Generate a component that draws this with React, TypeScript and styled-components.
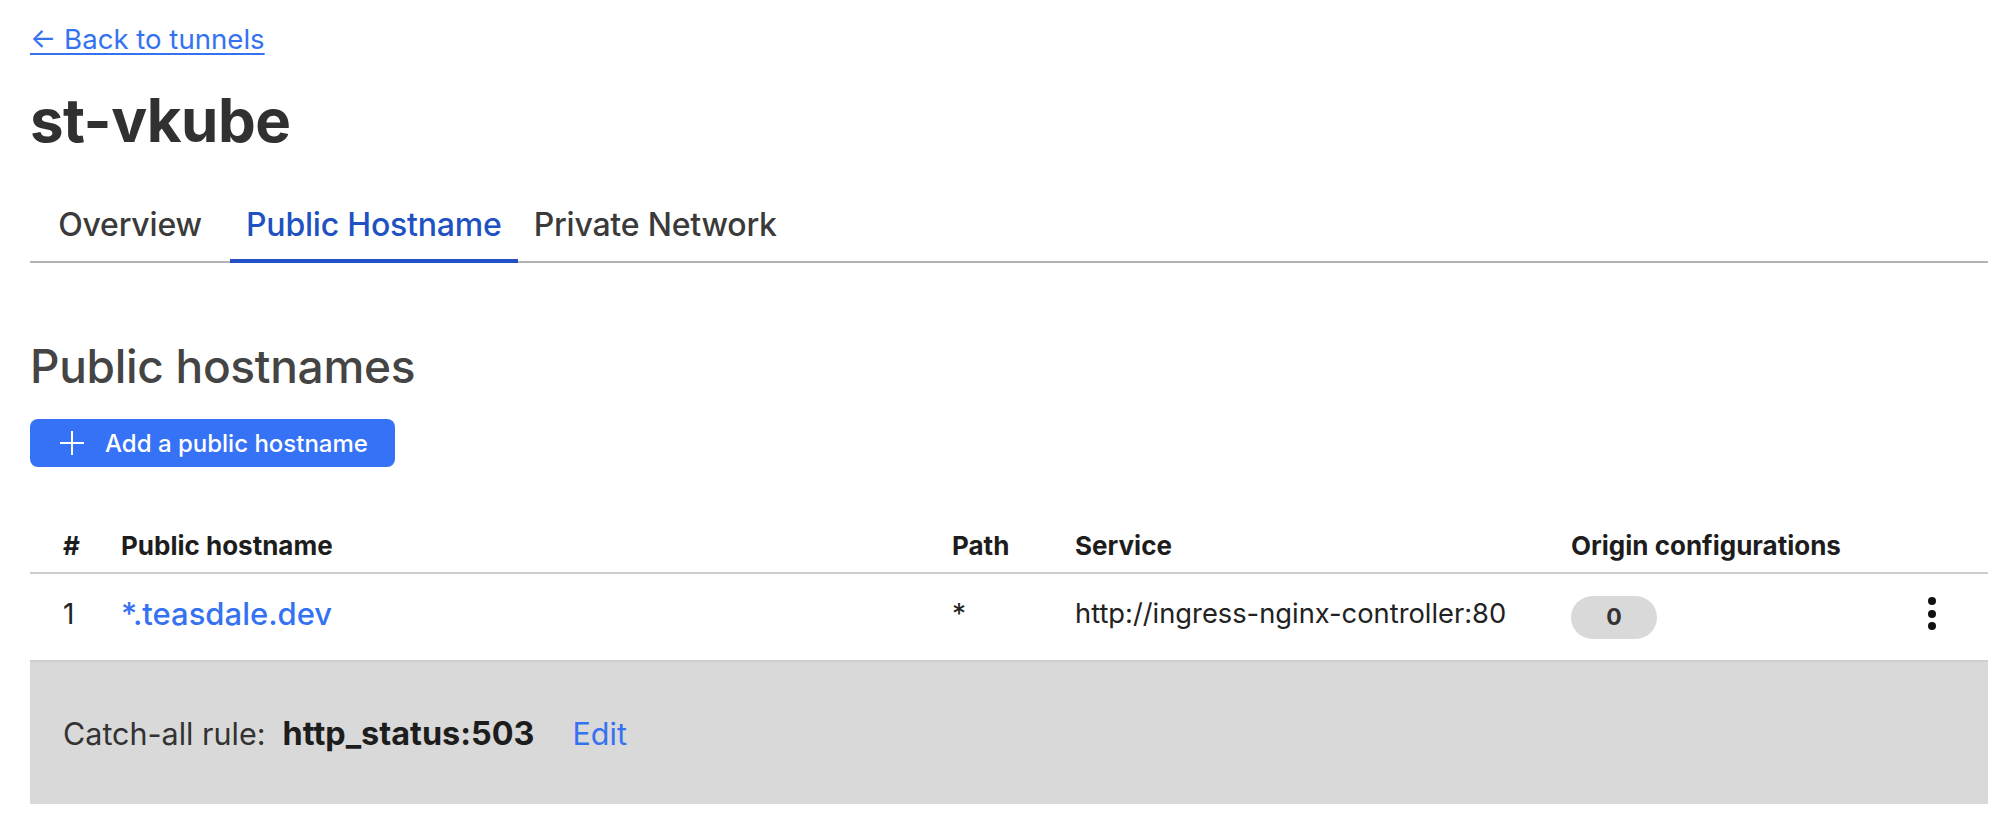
import React from "react";
import styled, { createGlobalStyle } from "styled-components";

const Global = createGlobalStyle`
  html, body { margin: 0; padding: 0; background: #ffffff; }
  body { font-family: Inter, "Noto Sans", "Liberation Sans", sans-serif; color: #313131; }
  * { box-sizing: border-box; }
`;

const Page = styled.div`
  display: flex;
  flex-direction: column;
  padding: 21px 28px 0 30px;
`;

const BackLink = styled.a`
  align-self: flex-start;
  font-size: 27.6px;
  line-height: 36px;
  color: #3572f2;
  text-decoration: underline;
  text-decoration-thickness: 2px;
  text-underline-offset: 4px;
  cursor: pointer;
`;

const Title = styled.h1`
  margin: 27px 0 0 0;
  font-size: 60px;
  line-height: 72px;
  font-weight: 700;
  color: #313131;
  letter-spacing: -0.5px;
`;

const TabList = styled.nav`
  display: flex;
  margin-top: 37px;
  box-shadow: inset 0 -2px 0 #b3b3b3;
`;

const Tab = styled.div<{ $active?: boolean; $wide?: boolean }>`
  min-width: ${(p) => (p.$wide ? "200px" : "0")};
  padding: 12px 16px 14px;
  text-align: center;
  font-size: 32px;
  line-height: 40px;
  font-weight: 500;
  color: ${(p) => (p.$active ? "#2051c2" : "#3a3a3a")};
  border-bottom: 4px solid ${(p) => (p.$active ? "#2350c4" : "transparent")};
  letter-spacing: -0.2px;
`;

const SectionTitle = styled.h2`
  margin: 75px 0 0 0;
  font-size: 46px;
  line-height: 56px;
  font-weight: 500;
  color: #444444;
  letter-spacing: -0.3px;
`;

const PrimaryButton = styled.button`
  align-self: flex-start;
  display: flex;
  align-items: center;
  gap: 21px;
  height: 48px;
  margin-top: 25px;
  padding: 0 27px 0 30px;
  border: none;
  border-radius: 8px;
  background: #3672f6;
  color: #ffffff;
  font-family: inherit;
  font-size: 24px;
  font-weight: 500;
  cursor: pointer;
`;

const Table = styled.div`
  margin-top: 51px;
  display: grid;
  grid-template-columns: 58px 831px 123px 496px 338px 112px;
`;

const HeadCell = styled.div`
  display: flex;
  align-items: center;
  height: 56px;
  padding-left: 33px;
  font-size: 26px;
  font-weight: 700;
  color: #1d1d1d;
  border-bottom: 2px solid #cccccc;
  white-space: nowrap;
`;

const Cell = styled.div<{ $center?: boolean; $raise?: boolean }>`
  display: flex;
  align-items: center;
  justify-content: ${(p) => (p.$center ? "center" : "flex-start")};
  height: 88px;
  padding-left: ${(p) => (p.$center ? "0" : "33px")};
  padding-bottom: ${(p) => (p.$raise ? "7px" : "0")};
  font-size: 28px;
  color: #222222;
  border-bottom: 2px solid #cfcfcf;
  white-space: nowrap;
`;

const HostLink = styled.a`
  font-size: 31px;
  font-weight: 500;
  color: #3572f2;
  text-decoration: none;
`;

const ServiceText = styled.span`
  font-size: 27.3px;
`;

const Badge = styled.span`
  display: inline-flex;
  align-items: center;
  justify-content: center;
  width: 86px;
  height: 43px;
  border-radius: 22px;
  background: #d9d9d9;
  font-size: 23px;
  font-weight: 700;
  color: #333333;
`;

const KebabButton = styled.button`
  display: flex;
  align-items: center;
  justify-content: center;
  margin-top: -6px;
  padding: 0;
  border: none;
  background: transparent;
  cursor: pointer;
`;

const CatchAll = styled.div`
  display: flex;
  align-items: center;
  height: 142px;
  padding-left: 33px;
  background: #d9d9d9;
  font-size: 30.5px;
  color: #333333;
`;

const CatchValue = styled.strong`
  margin-left: 17px;
  font-size: 32.4px;
  font-weight: 700;
  color: #1d1d1d;
`;

const EditLink = styled.a`
  margin-left: 38px;
  color: #3572f2;
  cursor: pointer;
`;

const PlusIcon = () => (
  <svg width="24" height="24" viewBox="0 0 24 24" fill="none" stroke="#ffffff" strokeWidth="2">
    <line x1="12" y1="0" x2="12" y2="24" />
    <line x1="0" y1="12" x2="24" y2="12" />
  </svg>
);

const KebabIcon = () => (
  <svg width="10" height="36" viewBox="0 0 10 36" fill="#111111">
    <circle cx="5" cy="5" r="4" />
    <circle cx="5" cy="18" r="4" />
    <circle cx="5" cy="30" r="4" />
  </svg>
);

export default function App() {
  return (
    <>
      <Global />
      <Page>
        <BackLink>← Back to tunnels</BackLink>
        <Title>st-vkube</Title>
        <TabList>
          <Tab $wide>Overview</Tab>
          <Tab $active>Public Hostname</Tab>
          <Tab>Private Network</Tab>
        </TabList>
        <SectionTitle>Public hostnames</SectionTitle>
        <PrimaryButton>
          <PlusIcon />
          Add a public hostname
        </PrimaryButton>
        <Table>
          <HeadCell>#</HeadCell>
          <HeadCell>Public hostname</HeadCell>
          <HeadCell>Path</HeadCell>
          <HeadCell>Service</HeadCell>
          <HeadCell>Origin configurations</HeadCell>
          <HeadCell />
          <Cell $raise>1</Cell>
          <Cell $raise>
            <HostLink>*.teasdale.dev</HostLink>
          </Cell>
          <Cell $raise>*</Cell>
          <Cell $raise>
            <ServiceText>http://ingress-nginx-controller:80</ServiceText>
          </Cell>
          <Cell>
            <Badge>0</Badge>
          </Cell>
          <Cell $center>
            <KebabButton aria-label="More actions">
              <KebabIcon />
            </KebabButton>
          </Cell>
        </Table>
        <CatchAll>
          Catch-all rule:
          <CatchValue>http_status:503</CatchValue>
          <EditLink>Edit</EditLink>
        </CatchAll>
      </Page>
    </>
  );
}
